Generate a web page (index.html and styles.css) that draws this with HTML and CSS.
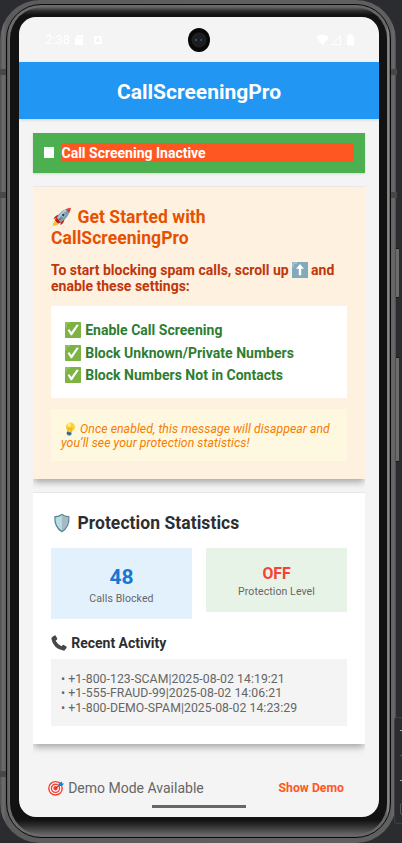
FILE: index.html
```
<!DOCTYPE html>
<html lang="en">
<head>
<meta charset="utf-8">
<title>CallScreeningPro</title>
<link rel="stylesheet" href="styles.css">
</head>
<body>
<svg width="0" height="0" class="defs">
  <symbol id="check" viewBox="0 0 16 16"><rect width="16" height="16" rx=".8" fill="#7cb342"/><path d="M1 5.5V1.7Q1 1 2 1h3" fill="none" stroke="#aed581" stroke-width=".8"/><path d="M2.6 8.3 4.2 7l2.2 3L11.8 2.4l2 .7L7 13.2H5.8z" fill="#fff"/></symbol>
</svg>
<div class="phone">
  <i class="key key-left-top"></i><i class="key key-left-mid"></i><i class="key key-left-low"></i>
  <i class="key key-right"></i><i class="key key-right-mid"></i>
  <i class="key power"></i><i class="key volume"></i>
  <div class="rim"><div class="bezel">
  <div class="screen">
    <div class="statusbar">
      <span class="clock">2:38</span>
      <svg class="sd" viewBox="0 0 8 10"><path d="M3 0h4.2q.8 0 .8.8V10H0V3z" fill="#fff"/><path d="M3 1.5v2M4.6 1.5v2M6.2 1.5v2" stroke="#f3f3f3" stroke-width=".8"/></svg>
      <svg class="a11y" viewBox="0 0 8 8"><rect width="8" height="8" rx="1.3" fill="#fff"/><path d="M2.2 6.2 4 2l1.8 4.2M3 4.8h2" stroke="#eee" fill="none"/></svg>
      <svg class="signals" viewBox="0 0 39 12"><path d="M0 3.2Q6.5-2 13 3.2L6.5 11.3z" fill="#fff"/><path d="M15.5 10.7 24.5 1.5v9.2z" fill="none" stroke="#fff"/><path d="M33 .2h3v1.2h2v9.9h-7V1.4h2z" fill="#fff"/></svg>
      <div class="camera"></div>
    </div>
    <header class="appbar">CallScreeningPro</header>
    <main>
      <section class="status"><i class="box"></i><span class="status-text">Call Screening Inactive</span></section>
      <section class="card start">
        <h1><svg class="emoji" viewBox="0 0 20 20"><path d="M1 18.7Q2 13.5 6 12l3 3q-2 3.5-8 3.7z" fill="#fbc02d"/><path d="M2 12q1.5-4 6-4.5L6 11zM9 18q3.8-2 4-6l-4 3z" fill="#c62828"/><path d="M5 11.5Q8 4 15.5 1.8L18.2 4.4Q16 12 8.6 15.2z" fill="#78a0b4"/><path d="M7 11Q10 5.5 15 3" stroke="#b7d2de" stroke-width="1.5" fill="none"/><path d="M14 2.2Q17 .8 19.4.7 19.2 3.4 17.7 6z" fill="#e53935"/><circle cx="11.8" cy="8" r="1.7" fill="#263f50" stroke="#dceaf1" stroke-width=".6"/><path d="M4.8 11.3l3.9 4-2.2.7-2.7-2.8zM5 15l5-4" fill="#b71c1c" stroke="#b71c1c" stroke-width=".8"/></svg> Get Started with<br>CallScreeningPro</h1>
        <p class="lead">To start blocking spam calls, scroll up <svg class="emoji" viewBox="0 0 16 16"><rect width="16" height="16" rx=".6" fill="#82aabd"/><path d="M1 5.5V1.8Q1 1 1.8 1H5" stroke="#b9d4df" fill="none"/><path d="M8 2 12 6.8H9.2v6.4H6.8V6.8H4z" fill="#fff"/></svg> and<br>enable these settings:</p>
        <ul class="steps">
          <li><svg class="emoji"><use href="#check"/></svg> Enable Call Screening</li>
          <li><svg class="emoji"><use href="#check"/></svg> Block Unknown/Private Numbers</li>
          <li><svg class="emoji"><use href="#check"/></svg> Block Numbers Not in Contacts</li>
        </ul>
        <p class="tip"><svg class="emoji bulb" viewBox="0 0 14 14"><g transform="rotate(12 7 7)"><path d="M7 .4A4.5 4.5 0 0 1 11.5 5C11.5 7.3 9.5 8 9.3 10H4.7C4.5 8 2.5 7.3 2.5 5A4.5 4.5 0 0 1 7 .4z" fill="#fdd22f"/><ellipse cx="5.3" cy="3.2" rx="1.5" ry="2" fill="#fff38a"/><path d="M5.6 10 5 6l2 1.2L9 6l-.6 4" fill="none" stroke="#f19b18" stroke-width=".7"/><path d="M4.7 10h4.6v2.7L8 13.7H6l-1.3-1z" fill="#547d91"/><path d="M4.7 11.4h4.6" stroke="#29485a" stroke-width=".7"/></g></svg> Once enabled, this message will disappear and<br>you’ll see your protection statistics!</p>
      </section>
      <section class="card stats">
        <h2><svg class="emoji" viewBox="0 0 20 20"><path d="M10.4.7Q13 3 18 3.2 18.8 14.5 10.4 19.4 2 14.5 2.8 3.2 7.8 3 10.4.7z" fill="#588695"/><path d="M10.4 2.3Q13 4 16.8 4.4 17 13.5 10.4 17.7 3.8 13.5 4 4.4 7.8 4 10.4 2.3z" fill="#b8dce3"/><path d="M10.4 2.3Q13 4 16.8 4.4 17 13.5 10.4 17.7z" fill="#a9b9c2"/></svg> Protection Statistics</h2>
        <div class="tiles">
          <div class="tile blue"><b>48</b><span>Calls Blocked</span></div>
          <div class="tile green"><b>OFF</b><span>Protection Level</span></div>
        </div>
        <h3><svg class="emoji" viewBox="0 0 16 16"><path d="M1.2 2.1 3.5.4Q4.3 0 4.9.9L6.2 3.5Q6.5 4.2 5.8 4.7L4.6 5.7Q6.7 9.5 10.5 11.3L11.5 10.2Q12 9.6 12.8 10L15.3 11.4Q16 11.9 15.6 12.7L14 15Q13.5 15.8 12.3 15.6 2.4 13.7.4 4 .2 2.9 1.2 2.1z" fill="#45494c"/></svg> Recent Activity</h3>
        <div class="log"><div>• +1-800-123-SCAM|2025-08-02 14:19:21</div><div>• +1-555-FRAUD-99|2025-08-02 14:06:21</div><div>• +1-800-DEMO-SPAM|2025-08-02 14:23:29</div></div>
      </section>
      <footer class="demo">
        <span><svg class="emoji" viewBox="0 0 16 16"><circle cx="7.5" cy="8.3" r="7.4" fill="#f44336"/><circle cx="7.5" cy="8.3" r="5.4" fill="none" stroke="#fff" stroke-width="1.2"/><circle cx="7.5" cy="8.3" r="2.8" fill="none" stroke="#fff" stroke-width="1.2"/><path d="M7.5 8.3 12 4.8" stroke="#344b65"/><path d="M10 5.7 11.5 2.7 14 1.5 13.8 3.3 16 3.6 14 6z" fill="#0288d1"/></svg> Demo Mode Available</span>
        <button>Show Demo</button>
      </footer>
    </main>
    <div class="home"></div>
  </div>
  </div></div>
</div>
<div class="toolbox"><i></i><i></i><i></i><b></b></div>
</body>
</html>
```
FILE: styles.css
```
* { box-sizing: border-box; margin: 0; padding: 0; }
body { width: 402px; height: 843px; overflow: hidden; background: #2b2c30; font-family: Roboto, sans-serif; position: relative; }
.defs { position: absolute; }
.phone { position: relative; width: 396px; height: 843px; padding: 4px 5px 5px 6px; border-radius: 40px; background: linear-gradient(90deg, #505050, #6e6e6e 3px, #5c5c5c 6px, #606060 391px, #6a6a6a 394px, #484848); }
.rim { height: 834px; border: 1px solid #0c0c0c; border-radius: 35px; padding: 2px 3px; background: linear-gradient(90deg, #555, #6b6b6b 2px, #666 380px, #999 381px, #555); }
.bezel { height: 828px; padding: 10px 7px 15px 9px; border-radius: 32px; background: linear-gradient(#666, #2c2c2c 4px, #121212 8px, #121212 813px, #303030 819px, #686868); }
.screen { width: 360px; height: 800px; background: #f4f4f4; border-radius: 17px; overflow: hidden; position: relative; }
.statusbar { height: 45px; padding: 0 24px 0 26px; display: flex; align-items: center; position: relative; color: #fff; }
.clock { font-size: 13px; width: 30px; }
.sd { width: 8px; height: 10px; }
.a11y { width: 8px; height: 8px; margin-left: 11px; }
.signals { width: 39px; height: 12px; margin-left: auto; }
.camera { position: absolute; left: 169px; top: 11px; width: 22px; height: 24px; border-radius: 50%; background: radial-gradient(circle at 8px 12px, #36626a 0 .5px, transparent 1.5px), radial-gradient(circle at 13px 12px, #30527a 0 .5px, transparent 1.5px), radial-gradient(circle, #1d1e20 0 7px, #080808 8px); }
.appbar { height: 57px; background: #2196f3; color: #fff; font-size: 21px; font-weight: 700; line-height: 60px; text-align: center; box-shadow: 0 1px 3px #0002; }
main { padding: 14px 14px 0; }
.status { height: 40px; padding: 10px 11px; background: #4caf50; display: flex; gap: 7px; box-shadow: 0 1px 2px #0002; }
.box { width: 10px; height: 11px; margin-top: 4px; background: #fff; }
.status-text { flex: 1; height: 19px; padding-left: .5px; background: #ff5722; color: #fff; font-size: 14px; font-weight: 700; line-height: 21px; }
.card { margin-top: 14px; padding: 0 18px; box-shadow: 0 4px 7px -1px #0005, 0 -1px 1px #00000008; clip-path: inset(-1px 0 -12px 0); }
.emoji { display: inline-block; width: 16px; height: 16px; vertical-align: -3px; margin-right: .7px; }
.start { height: 292px; background: #fff1df; padding-top: 20px; }
h1, h2 { font-size: 17.5px; line-height: 21px; font-weight: 700; letter-spacing: .06px; }
h1 .emoji, h2 .emoji { width: 21px; height: 20px; vertical-align: -4px; margin-right: 1px; }
h1 { color: #e65100; }
.lead { margin-top: 13px; color: #bf360c; font-size: 14px; font-weight: 700; line-height: 16.4px; }
.lead .emoji { margin: 0 0 0 -.5px; }
.steps { list-style: none; margin-top: 11px; height: 92px; padding: 13px 14px; background: #fff; color: #2e7d32; font-size: 14px; font-weight: 700; line-height: 22.7px; letter-spacing: .02px; }
.tip { margin-top: 11px; height: 52px; padding: 13px 0 0 10px; background: #fff8e1; color: #f57c00; font-size: 12.25px; line-height: 14.4px; letter-spacing: .06px; font-style: italic; white-space: nowrap; }
.tip .bulb { width: 14px; height: 14px; margin: 0 0 0 2px; }
.stats { height: 251px; background: #fff; padding-top: 20px; }
h2 { color: #2e2e30; }
.tiles { display: flex; gap: 14px; margin-top: 14px; align-items: flex-start; }
.tile { flex: 1; display: flex; flex-direction: column; align-items: center; color: #666; font-size: 10.5px; line-height: 12px; letter-spacing: .1px; }
.tile b { line-height: 25px; letter-spacing: 0; }
.blue { height: 71px; background: #e3f1fd; padding-top: 17px; }
.blue b { font-size: 21px; color: #1976d2; margin-bottom: 3px; }
.green { height: 64px; background: #e8f3e8; padding-top: 17px; }
.green b { font-size: 15.75px; line-height: 18px; color: #f44336; margin-bottom: 3px; }
h3 { margin-top: 16px; color: #2e2e30; font-size: 14px; line-height: 17px; }
.log { height: 67px; margin-top: 7px; padding: 13px 10px; background: #f4f4f4; color: #666; font-size: 12.25px; line-height: 14.4px; letter-spacing: .06px; }
.demo { display: flex; justify-content: space-between; align-items: center; height: 32px; margin-top: 28px; padding: 0 21px 0 15px; color: #666; font-size: 14px; }
.demo button { border: 0; background: none; color: #ff5722; font: 700 12.25px Roboto, sans-serif; }
.home { position: absolute; left: 133px; bottom: 9px; width: 94px; height: 3px; background: #666; }
.key { position: absolute; background: #6b6b6b; border-block: 1px solid #171717; }
.key-left-top, .key-left-mid, .key-left-low, .key-right, .key-right-mid { left: 0; width: 6px; height: 6px; background: #484848; border: 0; }
.key-left-top { top: 69px; }
.key-left-mid { top: 192px; }
.key-left-low { top: 771px; }
.key-right, .key-right-mid { left: 391px; }
.key-right { top: 69px; }
.key-right-mid { top: 192px; }
.power, .volume { left: 396px; width: 3px; }
.power { top: 248px; height: 50px; }
.volume { top: 357px; height: 105px; }
.toolbox { position: absolute; left: 394px; top: 717px; width: 10px; height: 107px; border: 1px solid #3e3f43; border-radius: 3px; background: #2b2c30; padding: 12px 0 0 5px; }
.toolbox i { display: block; width: 3px; height: 1px; margin-bottom: 24px; background: #aaa; }
.toolbox i:nth-child(2) { background: #55565b; }
.toolbox i:nth-child(3) { margin-bottom: 22px; }
.toolbox b { display: block; width: 5px; height: 12px; border: 1px solid #55565b; border-radius: 2px; }
```
